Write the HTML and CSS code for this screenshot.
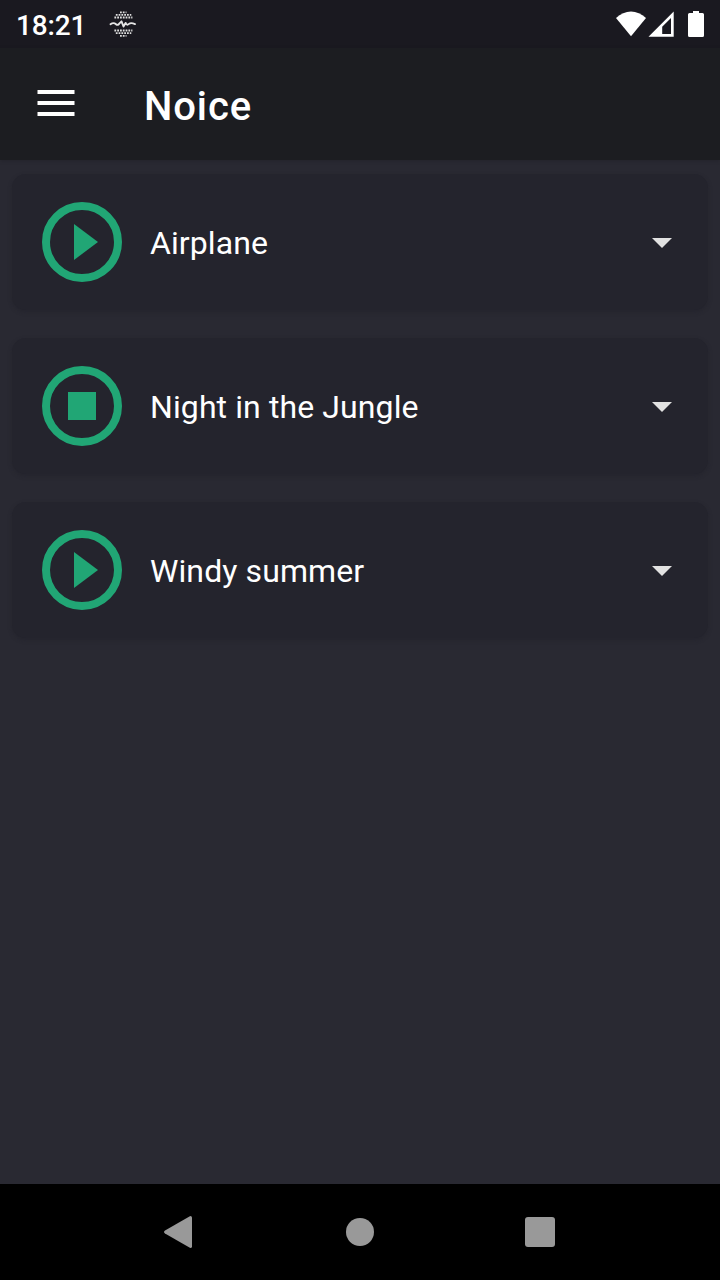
FILE: index.html
```html
<!DOCTYPE html>
<html lang="en">
<head>
<meta charset="utf-8">
<title>Noice</title>
<link rel="stylesheet" href="styles.css">
</head>
<body>
<div class="screen">
  <div class="status-bar">
    <span class="clock">18:21</span>
    <svg class="notification" width="28" height="28" viewBox="0 0 28 28">
      <g class="dots">
        <path d="M11 2.300h6.500M6.800 4.800h15.500M5.400 7.500h18M5.400 20.500h18M6.800 23.200h15.500M11 25.800h6.500"/>
      </g>
      <path class="wave" d="M1.500 14.300C3.500 12.800 5.500 12.900 7 14.200S9.700 14.700 10.500 13.300L12.500 11.300 14.500 16.500 16.600 12.900C17.500 15 18.500 15.200 20 13.900S23.500 13 26 14.100"/>
    </svg>
    <svg class="system" width="104" height="48" viewBox="0 0 104 48">
      <path d="M15 36.300 0 18C9 9.300 21 9.300 30 18Z"/>
      <path fill-rule="evenodd" d="M32.500 36.700 57.700 11.500V36.700ZM46.200 26.700V34H55V17.900Z"/>
      <path d="M77 11h6v2h3.500q1.500 0 1.500 1.500v21q0 1.500-1.500 1.500h-13q-1.500 0-1.500-1.500v-21q0-1.500 1.500-1.500H77Z"/>
    </svg>
  </div>
  <header class="app-bar">
    <svg class="menu" width="38" height="26" viewBox="0 0 38 26"><path d="M.5 0h37v4H.5zM.5 11h37v4H.5zM.5 22h37v4H.5z"/></svg>
    <h1 class="title">Noice</h1>
  </header>
  <main class="presets">
    <section class="card">
      <svg class="toggle" width="80" height="80" viewBox="0 0 80 80"><circle cx="40" cy="40" r="36"/><path d="M32 22v36l24-18z"/></svg>
      <span class="name">Airplane</span>
      <svg class="expand" width="20" height="10" viewBox="0 0 20 10"><path d="M0 0h20L10 10z"/></svg>
    </section>
    <section class="card">
      <svg class="toggle" width="80" height="80" viewBox="0 0 80 80"><circle cx="40" cy="40" r="36"/><path d="M26 26h28v28H26z"/></svg>
      <span class="name">Night in the Jungle</span>
      <svg class="expand" width="20" height="10" viewBox="0 0 20 10"><path d="M0 0h20L10 10z"/></svg>
    </section>
    <section class="card">
      <svg class="toggle" width="80" height="80" viewBox="0 0 80 80"><circle cx="40" cy="40" r="36"/><path d="M32 22v36l24-18z"/></svg>
      <span class="name">Windy summer</span>
      <svg class="expand" width="20" height="10" viewBox="0 0 20 10"><path d="M0 0h20L10 10z"/></svg>
    </section>
  </main>
  <nav class="nav-bar">
    <svg width="32" height="32" viewBox="0 0 32 32"><path d="M26.300 0Q28 0 28 1.500V30.500Q28 32 26.300 32L1 17.500Q-1 16 1 14.500Z"/></svg>
    <svg width="32" height="32" viewBox="0 0 32 32"><circle cx="16" cy="16" r="14"/></svg>
    <svg width="32" height="32" viewBox="0 0 32 32"><rect x="1" y="1" width="30" height="30" rx="3"/></svg>
  </nav>
</div>
</body>
</html>
```
FILE: styles.css
```css
* { box-sizing: border-box; }
body { margin: 0; background: #292932; color: #fff; font-family: Roboto, sans-serif; }
svg { display: block; flex: none; }
.screen { display: flex; flex-direction: column; width: 720px; height: 1280px; }
.status-bar { display: flex; align-items: center; height: 48px; padding-left: 16px; background: #1a1920; }
.clock { width: 93px; padding-top: 4px; font-size: 28px; font-weight: 500; line-height: 34px; letter-spacing: -.15px; }
.dots { fill: none; stroke: #dedede; stroke-width: 1.8; stroke-dasharray: 1.8 1; }
.wave { fill: none; stroke: #e6e6e6; stroke-width: 1.9; stroke-linecap: round; stroke-linejoin: round; }
.system { margin-left: auto; fill: #fff; }
.app-bar { display: flex; height: 112px; padding: 42px 37px 0; background: #1c1d21; box-shadow: 0 1px 4px rgba(0, 0, 0, .14); }
.menu { fill: #fff; }
.title { margin: -7px 0 0 69px; font-size: 40px; font-weight: 500; line-height: 48px; letter-spacing: .9px; }
.presets { display: flex; flex: 1; flex-direction: column; gap: 28px; padding: 14px 12px; }
.card { display: flex; align-items: center; height: 136px; padding: 0 36px 0 30px; border-radius: 14px; background: #24242d; box-shadow: 0 2px 4px rgba(28, 28, 36, .35); }
.toggle circle { fill: none; stroke: #21a675; stroke-width: 8; }
.toggle path { fill: #21a675; }
.name { flex: 1; margin-left: 28px; padding-top: 2px; font-size: 32px; line-height: 38px; letter-spacing: .1px; }
.expand { margin-top: 2px; fill: #e2e2e2; }
.nav-bar { display: flex; justify-content: center; align-items: center; gap: 148px; height: 96px; background: #000; fill: #999; }
```
